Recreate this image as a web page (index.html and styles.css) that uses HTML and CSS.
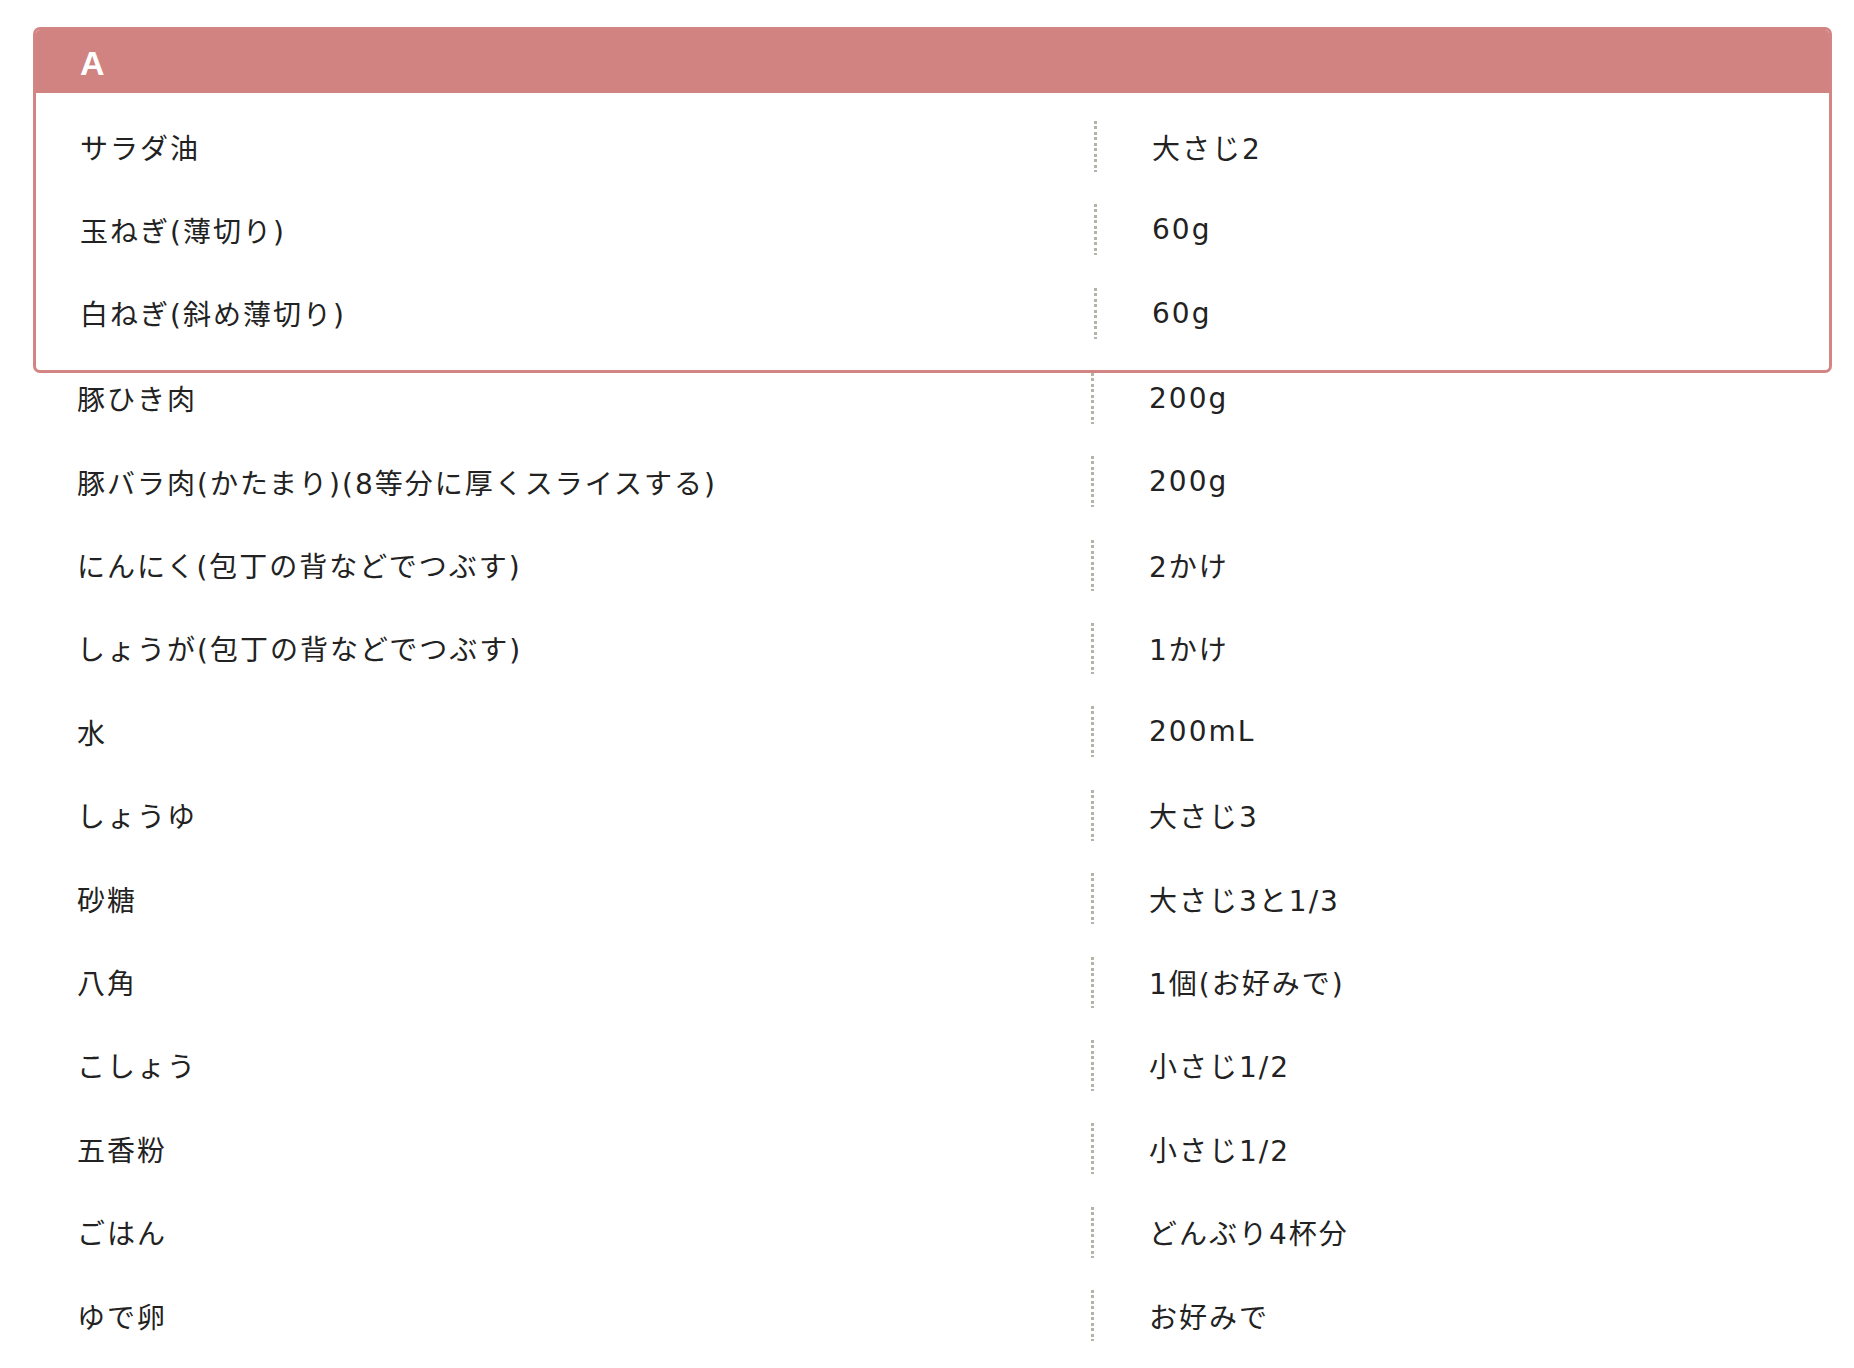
FILE: index.html
```html
<!DOCTYPE html>
<html lang="ja">
<head>
<meta charset="utf-8">
<title>材料</title>
<link rel="stylesheet" href="styles.css">
</head>
<body>
<div class="page">
  <section class="group">
    <div class="group-head">A</div>
    <div class="group-rows">
      <div class="row"><div class="name">サラダ油</div><div class="qty">大さじ2</div></div>
      <div class="row"><div class="name">玉ねぎ(薄切り)</div><div class="qty">60g</div></div>
      <div class="row"><div class="name">白ねぎ(斜め薄切り)</div><div class="qty">60g</div></div>
    </div>
  </section>
  <div class="rows">
    <div class="row"><div class="name">豚ひき肉</div><div class="qty">200g</div></div>
    <div class="row"><div class="name">豚バラ肉(かたまり)(8等分に厚くスライスする)</div><div class="qty">200g</div></div>
    <div class="row"><div class="name">にんにく(包丁の背などでつぶす)</div><div class="qty">2かけ</div></div>
    <div class="row"><div class="name">しょうが(包丁の背などでつぶす)</div><div class="qty">1かけ</div></div>
    <div class="row"><div class="name">水</div><div class="qty">200mL</div></div>
    <div class="row"><div class="name">しょうゆ</div><div class="qty">大さじ3</div></div>
    <div class="row"><div class="name">砂糖</div><div class="qty">大さじ3と1/3</div></div>
    <div class="row"><div class="name">八角</div><div class="qty">1個(お好みで)</div></div>
    <div class="row"><div class="name">こしょう</div><div class="qty">小さじ1/2</div></div>
    <div class="row"><div class="name">五香粉</div><div class="qty">小さじ1/2</div></div>
    <div class="row"><div class="name">ごはん</div><div class="qty">どんぶり4杯分</div></div>
    <div class="row"><div class="name">ゆで卵</div><div class="qty">お好みで</div></div>
  </div>
</div>
</body>
</html>
```
FILE: styles.css
```css
html, body {
  margin: 0;
  padding: 0;
  background: #ffffff;
}

body {
  font-family: "DejaVu Sans", "Noto Sans CJK JP", sans-serif;
  font-size: 28px;
  letter-spacing: 2px;
  color: #222222;
}

.page {
  padding: 27px 22px 0 33px;
}

.group {
  border: 3px solid #d38583;
  border-radius: 7px;
  overflow: hidden;
}

.group-head {
  height: 63px;
  display: flex;
  align-items: center;
  padding-left: 44px;
  padding-top: 3px;
  box-sizing: border-box;
  background: #d18381;
  color: #ffffff;
  font-family: "Liberation Sans", "Noto Sans CJK JP", sans-serif;
  font-weight: bold;
  font-size: 34px;
  letter-spacing: 0;
}

.group-rows {
  display: flex;
  flex-direction: column;
  gap: 32.4px;
  padding: 28px 0 31px;
}

.rows {
  display: flex;
  flex-direction: column;
  gap: 32.4px;
}

.row {
  display: grid;
  grid-template-columns: 1058px 1fr;
  height: 51px;
  align-items: center;
}

.name {
  padding-left: 44px;
  white-space: nowrap;
}

.qty {
  height: 100%;
  display: flex;
  align-items: center;
  padding-left: 58px;
  background-image: linear-gradient(to bottom, #b4b3a7 0, #b4b3a7 3px, transparent 3px, transparent 5px, #b4b3a7 5px, #b4b3a7 8px, transparent 8px);
  background-size: 3px 11px;
  background-repeat: repeat-y;
  background-position: 0 0;
  white-space: nowrap;
}
```
